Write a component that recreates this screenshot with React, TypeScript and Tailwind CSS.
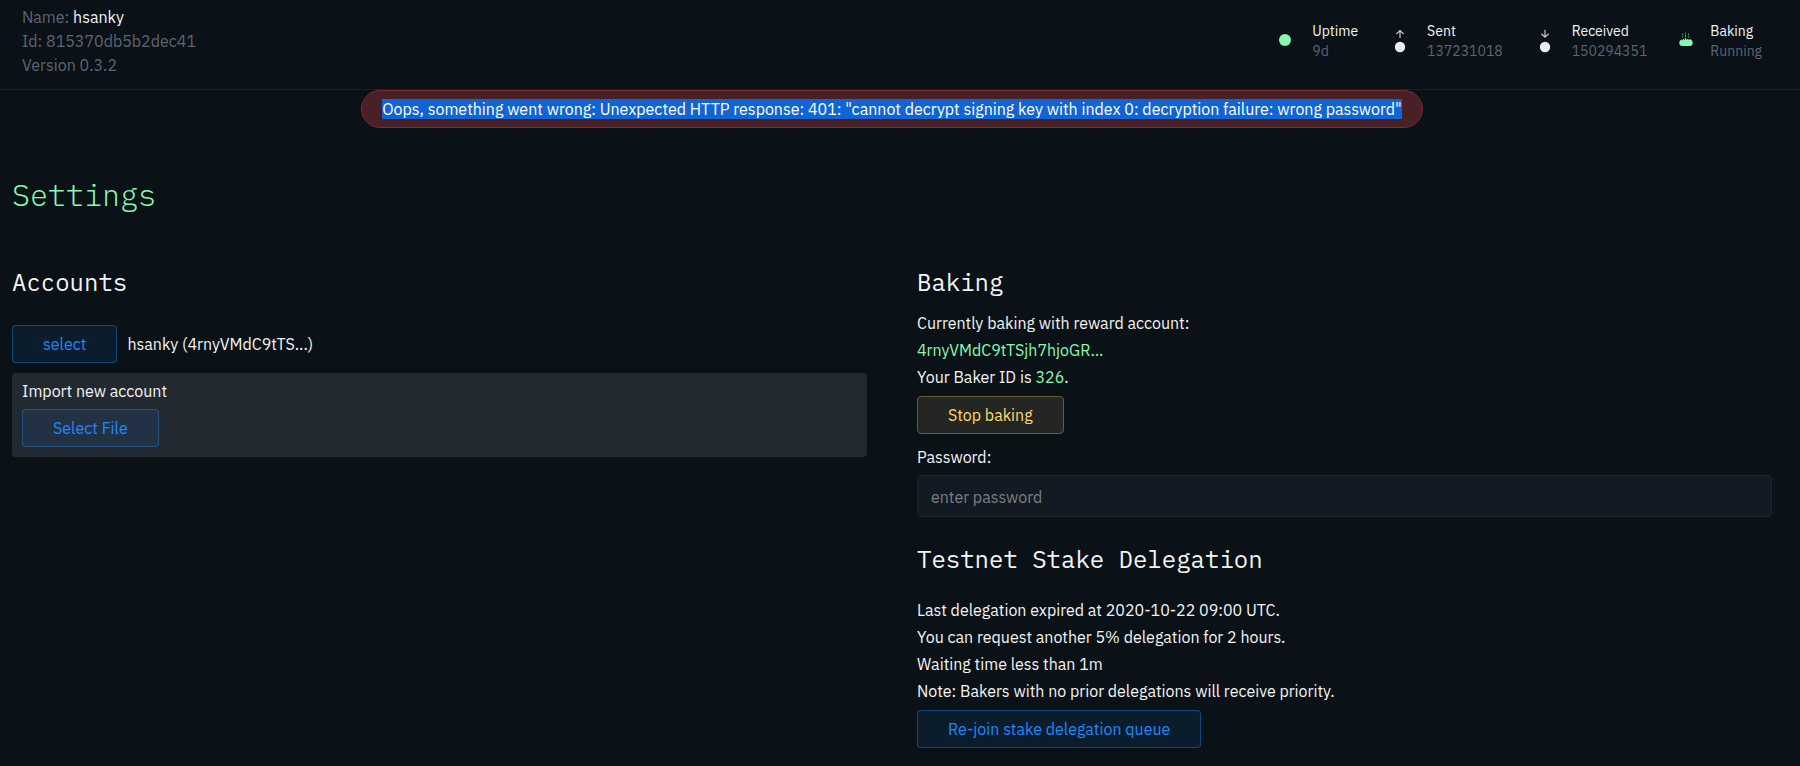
import type { ReactNode } from "react";

const mono = "font-['IBM_Plex_Mono','Liberation_Mono',monospace]";

function Stat({ icon, label, value, className }: { icon: ReactNode; label: string; value: string; className: string }) {
  return (
    <div className={`flex items-center ${className}`}>
      <div className="flex w-4 shrink-0 justify-center">{icon}</div>
      <dl className="text-sm leading-5">
        <dt className="text-[#f4f4f4]">{label}</dt>
        <dd className="text-[#5f6474]">{value}</dd>
      </dl>
    </div>
  );
}

function TransferIcon({ down = false }: { down?: boolean }) {
  return (
    <svg width="12" height="24" viewBox="0 0 12 24" fill="none" aria-hidden="true">
      <path
        d={down ? "M6 .8V8M2.4 4.8L6 8.2L9.6 4.8" : "M6 9V1.5M2.4 5.1L6 1.6L9.6 5.1"}
        stroke="#c9cbcd"
        strokeWidth="1.2"
      />
      <circle cx="6" cy="18" r="5.2" fill="#ededed" />
    </svg>
  );
}

function BreadIcon() {
  return (
    <svg width="14" height="18" viewBox="0 0 14 18" fill="none" aria-hidden="true">
      <path
        d="M.3 11C.3 9.2 1.2 8 2.6 7.4L3.4 8.4L4.2 6.6L5.6 8L6.6 5.8L7.8 8L9 6.4L9.9 8.2L11 7.1C12.8 7.8 13.7 9.2 13.7 11C13.7 13 12.6 14 11 14H3C1.4 14 .3 13 .3 11Z"
        fill="#86fab0"
      />
      <path d="M3.6 1.5V3M3.6 4V5.4M6.5 .5V2.4M6.5 3V5.4M9.5 1.5V3M9.5 4V5.4" stroke="#4a9a70" strokeWidth="1" />
    </svg>
  );
}

function BlueButton({ children }: { children: ReactNode }) {
  return (
    <button
      type="button"
      className="h-[38px] rounded border border-[#2186eb]/40 bg-[#2186eb]/10 px-[30px] text-[#1f87ff]"
    >
      {children}
    </button>
  );
}

export default function App() {
  return (
    <div className="min-h-screen bg-[#0a1117] font-['IBM_Plex_Sans','Roboto',sans-serif] text-base leading-[27px] text-[#f4f4f4]">
      <header className="flex items-center justify-between border-b border-[#1a2229] pt-[5px] pr-[38px] pb-3 pl-[22px]">
        <div className="leading-6 text-[#5f6474]">
          <p>
            Name: <span className="text-[#f4f4f4]">hsanky</span>
          </p>
          <p>Id: 815370db5b2dec41</p>
          <p>Version 0.3.2</p>
        </div>
        <div className="flex items-center">
          <Stat className="gap-[19px]" icon={<span className="mb-0.5 size-3 rounded-full bg-[#86fab0]" />} label="Uptime" value="9d" />
          <Stat className="ml-[34px] gap-[19px]" icon={<TransferIcon />} label="Sent" value="137231018" />
          <Stat className="ml-[34px] gap-[19px]" icon={<TransferIcon down />} label="Received" value="150294351" />
          <Stat className="ml-[31px] gap-4" icon={<BreadIcon />} label="Baking" value="Running" />
        </div>
      </header>

      <main className="pr-7 pl-3">
        <div role="alert" className="mx-auto flex h-[38px] w-fit items-center rounded-full border border-[#7a2b35] bg-[#4a2027] px-5">
          <span className="bg-[#1064d4] leading-5 text-white">
            Oops, something went wrong: Unexpected HTTP response: 401: "cannot decrypt signing key with index 0:
            decryption failure: wrong password"
          </span>
        </div>

        <h1 className={`mt-[47px] text-[30px] leading-10 font-light text-[#86fab0] ${mono}`}>Settings</h1>

        <div className="mt-[51px] grid grid-cols-2 gap-[50px]">
          <section>
            <h2 className={`text-2xl leading-8 ${mono}`}>Accounts</h2>
            <div className="mt-[27px] flex items-center gap-2.5">
              <BlueButton>select</BlueButton>
              <span>hsanky (4rnyVMdC9tTS...)</span>
            </div>
            <div className="mt-2.5 rounded bg-[#232931] px-2.5 pt-[5px] pb-2.5">
              <p className="mb-1">Import new account</p>
              <BlueButton>Select File</BlueButton>
            </div>
          </section>

          <section>
            <h2 className={`text-2xl leading-8 ${mono}`}>Baking</h2>
            <div className="mt-3">
              <p>Currently baking with reward account:</p>
              <p className="text-[#86fab0]">4rnyVMdC9tTSjh7hjoGR...</p>
              <p>
                Your Baker ID is <span className="text-[#86fab0]">326</span>.
              </p>
            </div>
            <button type="button" className="mt-[5px] h-[38px] rounded border border-[#665a3a] bg-[#232623] px-[30px] text-[#ffd86f]">
              Stop baking
            </button>
            <label htmlFor="password" className="mt-2.5 block">
              Password:
            </label>
            <input
              id="password"
              type="password"
              placeholder="enter password"
              className="mt-1 block h-[42px] w-full rounded-sm border border-[#1d242c] bg-[#131a23] px-[13px] pt-0.5 placeholder:text-[#7a7f80]"
            />
            <h2 className={`mt-[26px] text-2xl leading-8 ${mono}`}>Testnet Stake Delegation</h2>
            <div className="mt-[22px] mb-[5px]">
              <p>Last delegation expired at 2020-10-22 09:00 UTC.</p>
              <p>You can request another 5% delegation for 2 hours.</p>
              <p>Waiting time less than 1m</p>
              <p>Note: Bakers with no prior delegations will receive priority.</p>
            </div>
            <BlueButton>Re-join stake delegation queue</BlueButton>
          </section>
        </div>
      </main>
    </div>
  );
}
